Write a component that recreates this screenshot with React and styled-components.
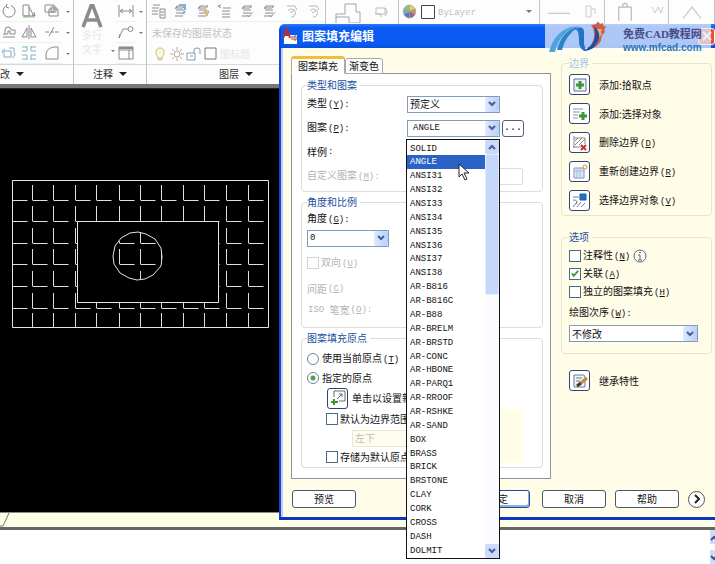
import React from "react";
import styled, { createGlobalStyle, css } from "styled-components";

const cjk = `"Noto Sans CJK SC", sans-serif`;
const mono = `"Liberation Mono", "Noto Sans CJK SC", monospace`;

const GlobalStyle = createGlobalStyle`
  *, *::before, *::after { box-sizing: border-box; }
  html, body { margin: 0; height: 100%; overflow: hidden; background: #fff; }
  #root { height: 100%; }
  body, button, select, input { font-family: ${cjk}; font-size: 10px; line-height: 14px; color: #111; }
  button, select, input, fieldset, legend, ul { margin: 0; padding: 0; }
`;

/* ---------- Main window ---------- */

const Page = styled.div`
  position: relative;
  min-height: 100vh;
  display: flex;
  flex-direction: column;
`;

const Ribbon = styled.header`
  display: flex;
  height: 84px;
  overflow: hidden;
  background: #fdfdfd;
`;

const RibbonPanel = styled.section`
  display: flex;
  flex-direction: column;
  flex: ${(p) => (p.$grow ? "1 0 auto" : "none")};
  width: ${(p) => p.$width}px;
  border-right: 1px solid #c4c4c4;
`;

const RibbonTools = styled.div`
  display: grid;
  grid-template-columns: ${(p) => p.$columns};
  grid-auto-rows: 21px;
  height: 65px;
  padding-top: 1px;
  align-items: center;
  justify-items: center;
  border-bottom: 1px solid #d9d9d9;
`;

const ToolButton = styled.button`
  display: flex;
  align-items: center;
  justify-content: center;
  width: 100%;
  height: 100%;
  overflow: hidden;
  border: 0;
  border-bottom: 1px solid #f0f0f0;
  background: none;
  color: #777;
`;

const BigTool = styled.button`
  grid-row: span 3;
  display: flex;
  flex-direction: column;
  align-items: center;
  justify-content: space-between;
  height: 100%;
  padding: 2px 0 8px;
  border: 0;
  background: none;
  color: #e6e6e6;
`;

const TallCell = styled.span`
  grid-row: span 3;
  align-self: end;
  padding-bottom: 12px;
`;

const ToolRow = styled.div`
  display: flex;
  align-items: center;
  justify-self: stretch;
  grid-column: 1 / -1;
  gap: ${(p) => p.$gap || 0}px;
  padding-left: 5px;
  color: ${(p) => p.$color || "#c2c2c2"};
`;

const LayerColor = styled.span`
  justify-self: start;
  color: #bdbdbd;
`;

const PanelTitle = styled.button`
  display: flex;
  align-items: center;
  justify-content: ${(p) => (p.$start ? "flex-start" : "center")};
  gap: 6px;
  height: 17px;
  border: 0;
  background: none;
  color: #333;
`;

const Caret = styled.span`
  display: block;
  width: 0;
  height: 0;
  border: ${(p) => p.$size || 2}px solid transparent;
  border-top-color: ${(p) => p.$color || "#777"};
  border-bottom: 0;
`;

const CanvasFrame = styled.div`
  height: 5px;
  border-bottom: 1px solid #2b2326;
  background: #777;
`;

const DrawingArea = styled.main`
  height: 423px;
  padding: 91px 12px;
  background: #000;
`;

const LayoutTabs = styled.div`
  height: 18px;
  border-top: 1px solid #888;
  border-bottom: 3px solid #666;
  background: #fcfee6;
`;

const CommandLine = styled.footer`
  display: flex;
  flex: 1;
  justify-content: flex-end;
  background: #fff;
`;

const MiniScroll = styled.div`
  display: flex;
  flex-direction: column;
  justify-content: space-between;
  width: 5px;
  overflow: hidden;
`;

const MiniArrow = styled.button`
  height: 14px;
  border: 0;
  background: #cfdcfb;
  color: #3c5488;
`;

/* ---------- Dialog ---------- */

const Dialog = styled.form`
  position: absolute;
  top: 24px;
  left: 279px;
  right: 0;
  border-left: 2px solid #1246d8;
  border-bottom: 3px solid #0b35c0;
  border-radius: 6px 0 0 0;
  background: #fffce8;
`;

const TitleBar = styled.div`
  display: flex;
  align-items: center;
  gap: 4px;
  height: 24px;
  padding: 0 0 0 2px;
  border-radius: 4px 0 0 0;
  background: linear-gradient(#2f7cf8 0, #0a5bf2 15%, #0a5bf2 80%, #0650dc);
  color: #fff;
`;

const Title = styled.h1`
  flex: 1;
  margin: 0;
  font-size: 12px;
  line-height: 16px;
  font-weight: 700;
`;

const CloseButton = styled.button`
  display: flex;
  align-items: center;
  justify-content: center;
  width: 17px;
  height: 17px;
  border: 1px solid #fff;
  border-radius: 3px;
  background: #e2502c;
`;

const Body = styled.div`
  display: grid;
  grid-template-columns: minmax(0, 260fr) minmax(0, 151fr);
  column-gap: 10px;
  padding: 8px 3px 0 8px;
  border-left: 2px solid #b5d2f2;
`;

const Tabs = styled.div`
  display: flex;
  align-items: flex-end;
  height: 18px;
  margin-bottom: -1px;
`;

const Tab = styled.button`
  position: relative;
  height: ${(p) => (p.$active ? 18 : 16)}px;
  padding: 0 ${(p) => (p.$active ? 6 : 3)}px;
  border: 1px solid #a5aab0;
  border-top: ${(p) => (p.$active ? "3px solid #f0bd3c" : "1px solid #a5aab0")};
  border-bottom-color: ${(p) => (p.$active ? "#fff" : "#a5aab0")};
  border-radius: 3px 3px 0 0;
  background: #fffefa;
  line-height: 12px;
`;

const TabPanel = styled.div`
  display: grid;
  gap: 3px;
  padding: 4px 7px 10px 9px;
  border: 1px solid #8d9499;
  background: #fff;
`;

const Group = styled.fieldset`
  min-width: 0;
  padding: 0 5px ${(p) => p.$bottom || 0}px ${(p) => p.$left || 5}px;
  border: 1px solid ${(p) => (p.$warm ? "#e6e4d2" : "#dcdcdc")};
  border-radius: 4px;
`;

const Legend = styled.legend`
  padding: 0 3px 0 0;
  color: ${(p) => (p.$faded ? "#9cc4ea" : "#1b4f9f")};
`;

const Row = styled.div`
  display: flex;
  align-items: center;
  height: ${(p) => p.$height}px;
  padding-left: ${(p) => p.$indent || 0}px;
  gap: ${(p) => p.$gap || 0}px;
  color: ${(p) => (p.$disabled ? "#b4b4b4" : "#111")};
  white-space: nowrap;
`;

const FieldLabel = styled.label`
  width: 100px;
  flex: none;
`;

const Latin = styled.span`
  margin-left: 1px;
  font-family: ${mono};
  font-size: 9px;
`;

const ComboBox = styled.div`
  position: relative;
  display: flex;
  flex: none;
  width: ${(p) => p.$width};
  height: 17px;
  border: 1px solid ${(p) => (p.$muted ? "#ebe6cf" : "#7f9db9")};
  background: ${(p) => (p.$muted ? "#fffdf0" : "#fff")};
`;

const NativeSelect = styled.select`
  flex: 1;
  min-width: 0;
  padding-left: ${(p) => p.$inset || 2}px;
  border: 0;
  outline: 0;
  appearance: none;
  background: none;
  line-height: 14px;
  ${(p) => p.$mono && css`font-family: ${mono}; font-size: 9px;`}
  &:disabled { color: #c4bfae; opacity: 1; }
`;

const DropMark = styled.span`
  display: flex;
  align-items: center;
  justify-content: center;
  flex: none;
  width: 14px;
  border-radius: 2px;
  background: linear-gradient(90deg, #dde9fe, #b9cffa);
  color: #44618f;
  pointer-events: none;
`;

const ListPopup = styled.div`
  position: absolute;
  z-index: 3;
  top: 18px;
  left: -2px;
  display: flex;
  width: 94px;
  height: 420px;
  border: 1px solid #111;
  background: #fff;
`;

const OptionList = styled.ul`
  display: grid;
  grid-auto-rows: 1fr;
  flex: 1;
  ul& { padding-top: 2px; }
  list-style: none;
  font-family: ${mono};
  font-size: 9px;
  line-height: 14px;
`;

const OptionItem = styled.li`
  min-height: 0;
  padding-left: 3px;
  overflow: hidden;
  background: ${(p) => (p.$selected ? "#2a62c6" : "none")};
  color: ${(p) => (p.$selected ? "#fff" : "#111")};
`;

const ScrollBar = styled.div`
  display: flex;
  flex-direction: column;
  justify-content: space-between;
  width: 14px;
  background: #fbfcff;
`;

const ScrollThumb = styled.div`
  height: 141px;
  margin-bottom: auto;
  border: 1px solid #e4edff;
  border-radius: 2px;
  background: #c5d7fb;
`;

const ScrollButton = styled.button`
  display: flex;
  align-items: center;
  justify-content: center;
  flex: none;
  height: 14px;
  border: 0;
  border-radius: 2px;
  background: #cbdafc;
  color: #44618f;
`;

const Pointer = styled.svg`
  position: absolute;
  z-index: 4;
  top: 42px;
  left: 50px;
`;

const BrowseButton = styled.button`
  width: 22px;
  height: 17px;
  margin-left: 2px;
  border: 1px solid #555c78;
  border-radius: 3px;
  background: #fff;
  font-family: ${mono};
`;

const TextBox = styled.input`
  width: 116px;
  height: 17px;
  border: 1px solid #dedede;
  border-radius: 2px;
  background: #fff;
`;

const Check = styled.input`
  appearance: none;
  flex: none;
  width: 12px;
  height: 12px;
  border: 1px solid #4a6a88;
  background: #fff;
  &:disabled { border-color: #d2d2d2; }
`;

const CheckHolder = styled.span`
  display: grid;
  flex: none;
  margin-right: 1px;
  & > * { grid-area: 1 / 1; }
  svg { place-self: center; pointer-events: none; }
`;

const Radio = styled.input`
  appearance: none;
  flex: none;
  width: 12px;
  height: 12px;
  border: 1px solid #6d8595;
  border-radius: 50%;
  background: #fff;
  &:checked { background: radial-gradient(circle, #49a349 0 2px, #fff 3px); }
`;

const IconButton = styled.button`
  display: flex;
  align-items: center;
  justify-content: center;
  flex: none;
  width: 21px;
  height: 21px;
  border: 1px solid #34436f;
  border-radius: 3px;
  background: #fff;
`;

const OriginPatch = styled.div`
  display: flex;
  justify-content: flex-end;
  height: 0;
`;

const PatchFill = styled.span`
  width: 50px;
  height: 54px;
  margin-right: 13px;
  background: #fffce8;
`;

const SideColumn = styled.div`
  min-width: 0;
`;

const SideGroup = styled.div`
  margin-bottom: ${(p) => p.$after}px;
`;

const Spaced = styled.div`
  padding-top: ${(p) => p.$top}px;
`;

const Actions = styled.div`
  display: flex;
  align-items: center;
  gap: 9px;
  padding: 11px 10px 9px 9px;
  border-left: 2px solid #b5d2f2;
`;

const ActionStart = styled.div`
  display: flex;
  flex: 1;
  justify-content: space-between;
  margin-right: 3px;
`;

const ActionButton = styled.button`
  width: 64px;
  height: 18px;
  border: 1px solid #49586b;
  border-radius: 3px;
  background: #fff;
  ${(p) => p.$primary && css`box-shadow: inset -1px -2px 0 #8eaee8; border-color: #28488c;`}
`;

const RoundButton = styled.button`
  display: flex;
  align-items: center;
  justify-content: center;
  width: 17px;
  height: 17px;
  border: 1px solid #555;
  border-radius: 50%;
  background: #fff;
`;

const Watermark = styled.aside`
  position: absolute;
  z-index: 5;
  top: 21px;
  right: 4px;
  display: flex;
  align-items: flex-start;
  gap: 12px;
  width: 166px;
  height: 33px;
  background: linear-gradient(transparent 0 3px, rgba(226, 235, 250, 0.75) 3px 27px, rgba(255, 255, 255, 0.5) 27px);
`;

const WatermarkText = styled.div`
  display: flex;
  flex-direction: column;
  padding-top: 5px;
`;

const SiteName = styled.strong`
  font-size: 11px;
  line-height: 16px;
  font-family: "Liberation Serif", "Noto Sans CJK SC", serif;
  color: #4a4a86;
  white-space: nowrap;
`;

const SiteLink = styled.a`
  font-family: "Liberation Sans", sans-serif;
  font-size: 10px;
  line-height: 11px;
  font-weight: 700;
  color: #2b74b4;
  text-decoration: none;
`;

/* ---------- Drawings ---------- */

const Glyph = ({ children, size = 16, color = "#8a8a8a", width = 1 }) => (
  <svg width={size} height={size} viewBox="0 0 16 16" fill="none" stroke={color} strokeWidth={width}>
    {children}
  </svg>
);

const Chevron = ({ up }) => (
  <svg width="8" height="6" viewBox="0 0 8 6" fill="none" stroke="currentColor" strokeWidth="2">
    <path d={up ? "M1 5 4 2 7 5" : "M1 1 4 4 7 1"} />
  </svg>
);

const layerSheets = "M5 3h8l-2 2H4zM4 7h8M4 10h8M3 13h8M5 3l-2 3";

const Icons = {
  rotate: <Glyph><path d="M5 3a6 6 0 1 0 5-.5M6 1 5 4l3 1" /></Glyph>,
  taper: <Glyph><path d="M2 2h6v11H2zM8 4l5 9H3M11 12l3 1-1-4" /><path d="M2 14h12" stroke="#8cc47c" /></Glyph>,
  copies: <Glyph><path d="M1 2h9v7H1zM5 6h9v7H5zM7 4h5v5H7z" /></Glyph>,
  offset: <Glyph><path d="M2 13h12M2 10h5M4 10V6a3 3 0 0 1 6 0h4v4M7 10V7h2v3h5" /></Glyph>,
  mirror: <Glyph><path d="M8 1v14M6 4v9H1zM10 4v9h5z" /></Glyph>,
  trim: <Glyph><path d="M1 8h4M7 8h3M11 8h4M5 12l5-9" /></Glyph>,
  stretch: <Glyph color="#7fb0cc"><path d="M3 6h7v6H3zM8 3h5v5M1 8a4 4 0 0 1 3-4M14 8a5 5 0 0 1-3 5" /></Glyph>,
  array: <Glyph color="#7fb4c8"><path d="M6 1v5H1M10 1v5h5M6 15v-5H1M10 15v-5h5M1 2h5M10 2h5M1 14h5M10 14h5" /></Glyph>,
  fillet: <Glyph><path d="M2 14V9q1-6 8-7h4v12z" /></Glyph>,
  dimension: <Glyph><path d="M1 2v12M15 2v12M2 8h12M5 6 2 8l3 2M11 6l3 2-3 2" /></Glyph>,
  leader: <Glyph><path d="M1 14 5 5h5M1 14l1-4" /><circle cx="12.5" cy="5" r="2.5" /></Glyph>,
  table: <Glyph><path d="M1 2h14v12H1zM1 5h14M11 5v9" /><path d="M1 3h14" strokeWidth="2" /></Glyph>,
  layerProps: <Glyph><path d="M3 2h7M2 5h7M2 8h6M2 11h6M10 6h5v9h-5zM11 9h3M11 12h3" /></Glyph>,
  layerBlue: <Glyph><path d={layerSheets} /><path d="M7 2h6v5M13 8l-2 3" stroke="#80acd8" strokeWidth="2" /></Glyph>,
  layerYellow: <Glyph><path d={layerSheets} /><path d="M9 8h5l-2 5z" fill="#d8c884" stroke="#c8b468" /></Glyph>,
  layerBack: <Glyph><path d="M6 5h8M5 8h8M5 11h8M5 14h8M1 3l3-1M1 3l3 2" /></Glyph>,
  layerMatch: <Glyph><path d={layerSheets} /><path d="M8 12l2 2 4-5" stroke="#80acd8" /></Glyph>,
  layerPrev: <Glyph color="#b8b8b8"><path d="M3 3h8l2 4M4 8a4 4 0 1 1 3 6M11 7l-5 3" /></Glyph>,
  bulb: <Glyph color="#c5c08b"><path d="M6 11C2 7 4 2 8 2s6 5 2 9v3H6zM6 12h4" fill="#fbf8d5" /></Glyph>,
  sun: <Glyph color="#b9a98b"><circle cx="8" cy="8" r="3" /><path d="M8 1v3M8 12v3M1 8h3M12 8h3M3 3l2 2M11 11l2 2M13 3l-2 2M3 13l2-2" /></Glyph>,
  lock: <Glyph color="#7f9fae"><path d="M1 7h8v7H1zM8 7V4q0-2 3-2t3 2v4M4 10h3" /></Glyph>,
  swatch: <Glyph color="#777"><path d="M2 2h11v11H2z" fill="#fff" /></Glyph>,
};

function Hatch() {
  const xs = [20, 41, 63, 84, 107, 128, 149, 171, 192, 214, 236];
  const ys = [20, 41, 63, 84, 106, 128];
  const verticals = xs.flatMap((x) => [...ys, 148].map((y) => `M${x + 0.5} ${y - 15}V${y}`)).join("");
  const horizontals = [0, ...xs].flatMap((x) => ys.map((y) => `M${x + 0.5} ${y + 0.5}h15`)).join("");
  const hatch = <path d={verticals + horizontals} stroke="#ddd" />;
  return (
    <svg width="257" height="148" fill="none" stroke="#e4e4e4" role="img" aria-label="填充图形">
      <defs>
        <clipPath id="disc"><circle cx="126" cy="76" r="24" /></clipPath>
      </defs>
      {hatch}
      <path d="M.5 .5h256v147H.5z" />
      <path d="M65.500 41.500h141v81h-141z" fill="#000" />
      <g clipPath="url(#disc)">{hatch}</g>
      <path d="m118 53 8-1 8 2 9 5 6 9 1 9-1 9-8 9-8 4-8 1-8-2-9-5-6-9-1-8 2-10 6-8z" />
    </svg>
  );
}

const Plus = ({ x, y }) => (
  <path d={`M${x - 4} ${y}h8M${x} ${y - 4}v8`} stroke="#3f9438" strokeWidth="3" />
);

const sideIcons = {
  pick: <Glyph color="#5a7098"><path d="M2 2h12v12H2z" fill="#eef3fb" /><Plus x={8} y={8} /></Glyph>,
  select: <Glyph color="#8997ad"><path d="M1 3h10M1 6h7M1 9h5M1 12h5" /><Plus x={11} y={10} /></Glyph>,
  remove: <Glyph color="#8c8c8c"><path d="M2 1v12M1 12h8M2 3h11v6M3 6l3-3M3 10l7-7M7 10l6-6" /><path d="m9 10 5 5M14 10l-5 5" stroke="#c03434" strokeWidth="2" /></Glyph>,
  recreate: <Glyph color="#7f98bf"><path d="M2 4h10v10H2z" fill="#dfe9f8" /><path d="M5 5v9M8 5v9M2 7h10" stroke="#a4b9dc" /><circle cx="13" cy="3" r="2" fill="#fff" stroke="#df8a42" /></Glyph>,
  view: <Glyph color="#6f7f90"><path d="M8 1h6v6H8z" fill="#1f73c6" stroke="#205ca2" /><path d="M1 4h6M1 7q6 0 3 4M1 14l4-5M5 14l4-5M9 14l4-4" /></Glyph>,
  inherit: <Glyph color="#6b7f96"><path d="M2 2h10l1 2v10H2z" fill="#eef3f8" /><path d="M4 5h6M4 8h4" /><path d="m9 10 6-5" stroke="#c98a3f" strokeWidth="3" /><path d="m5 13 4-3" stroke="#503420" strokeWidth="3" /></Glyph>,
  origin: <Glyph color="#5c6f64"><path d="M4 1h11v10H9M4 1v6M7 9l5-5M9 4h3v3" /><path d="M1 12h7M4 9v6" stroke="#3f9438" strokeWidth="2" /></Glyph>,
};

/* ---------- Data ---------- */

const patterns = [
  "SOLID", "ANGLE", "ANSI31", "ANSI32", "ANSI33", "ANSI34", "ANSI35", "ANSI36", "ANSI37", "ANSI38",
  "AR-B816", "AR-B816C", "AR-B88", "AR-BRELM", "AR-BRSTD", "AR-CONC", "AR-HBONE", "AR-PARQ1",
  "AR-RROOF", "AR-RSHKE", "AR-SAND", "BOX", "BRASS", "BRICK", "BRSTONE", "CLAY", "CORK", "CROSS",
  "DASH", "DOLMIT",
];

const boundaryActions = [
  { icon: "pick", text: "添加:拾取点" },
  { icon: "select", text: "添加:选择对象" },
  { icon: "remove", text: "删除边界", mnemonic: "D" },
  { icon: "recreate", text: "重新创建边界", mnemonic: "R" },
  { icon: "view", text: "选择边界对象", mnemonic: "V" },
];

/* ---------- Parts ---------- */

const Key = ({ k, colon }) => (
  <Latin>(<u>{k}</u>){colon && ":"}</Latin>
);

function Combo({ id, value, options, width, disabled, useMono, inset, children, plain }) {
  return (
    <ComboBox $width={width} $muted={disabled}>
      <NativeSelect id={id} aria-label={value} defaultValue={value} disabled={disabled} $mono={useMono} $inset={inset}>
        {(options || [value]).map((o) => <option key={o}>{o}</option>)}
      </NativeSelect>
      {!plain && <DropMark><Chevron /></DropMark>}
      {children}
    </ComboBox>
  );
}

function CheckRow({ id, text, mnemonic, checked, disabled, height, indent, extra }) {
  return (
    <Row $height={height} $indent={indent} $disabled={disabled} $gap={1}>
      <CheckHolder>
        <Check id={id} type="checkbox" defaultChecked={checked} disabled={disabled} />
        {checked && <Glyph size={10} color="#3d9a3d" width={3}><path d="m3 7 3 4 7-8" /></Glyph>}
      </CheckHolder>
      <label htmlFor={id}>{text}{mnemonic && <Key k={mnemonic} />}</label>
      {extra}
    </Row>
  );
}

const Tool = ({ name }) => <ToolButton type="button" aria-label={name}>{Icons[name]}</ToolButton>;

function RibbonBar() {
  return (
    <Ribbon>
      <RibbonPanel $width={74}>
        <RibbonTools $columns="18px 22px 23px 10px">
          <Tool name="rotate" /><Tool name="taper" /><Tool name="copies" /><Caret />
          <Tool name="offset" /><Tool name="mirror" /><Tool name="trim" /><Caret />
          <Tool name="stretch" /><Tool name="array" /><Tool name="fillet" /><Caret />
        </RibbonTools>
        <PanelTitle $start>改<Caret $size={4} $color="#222" /></PanelTitle>
      </RibbonPanel>
      <RibbonPanel $width={73}>
        <RibbonTools $columns="36px 6px 20px 10px">
          <BigTool type="button">
            <svg width="24" height="28" viewBox="0 0 24 28" fill="none" stroke="#8b8b8b" strokeWidth="4">
              <path d="M2 27 11 3h2l9 24M6 19h12" />
            </svg>
            <span>多行<br />文字</span>
          </BigTool>
          <TallCell><Caret /></TallCell>
          <Tool name="dimension" /><Caret />
          <Tool name="leader" /><Caret />
          <Tool name="table" /><span />
        </RibbonTools>
        <PanelTitle>注释<Caret $size={4} $color="#222" /></PanelTitle>
      </RibbonPanel>
      <RibbonPanel $width={179}>
        <RibbonTools $columns="repeat(8, 1fr)">
          <Tool name="layerProps" /><Tool name="layerBlue" /><Tool name="layerYellow" /><Tool name="layerBack" />
          <Tool name="layerMatch" /><Tool name="layerMatch" /><Tool name="layerPrev" /><Tool name="layerPrev" />
          <ToolRow>未保存的图层状态</ToolRow>
          <ToolRow $gap={1} $color="#e6e6e6">{Icons.bulb}{Icons.sun}{Icons.lock}{Icons.swatch}图标题</ToolRow>
        </RibbonTools>
        <PanelTitle>图层<Caret $size={4} $color="#222" /></PanelTitle>
      </RibbonPanel>
      <RibbonPanel $width={73}>
        <RibbonTools $columns="43px 24px">
          <svg width="26" height="22" fill="none" stroke="#a4a4a4"><path d="M10 3h11v8h4v11H14v-6H1v6M10 3v10H1v4" /></svg>
          <Glyph color="#bbb"><path d="M3 4h9v6H3zM12 4q4 4 0 8M2 10h6v3" /></Glyph>
        </RibbonTools>
      </RibbonPanel>
      <RibbonPanel $width={141}>
        <RibbonTools $columns="20px 18px 1fr 20px">
          <svg width="15" height="15" viewBox="0 0 16 16" stroke="#999" strokeWidth=".6">
            <path d="M8 8V1a7 7 0 0 1 6 4z" fill="#e8d166" /><path d="m8 8 6-3a7 7 0 0 1 0 6z" fill="#dc8b4e" />
            <path d="m8 8 6 3a7 7 0 0 1-6 4z" fill="#a35b9c" /><path d="M8 8v7a7 7 0 0 1-6-4z" fill="#5a74ba" />
            <path d="m8 8-6 3a7 7 0 0 1 0-6z" fill="#68b6c0" /><path d="M8 8 2 5a7 7 0 0 1 6-4z" fill="#93c46b" />
          </svg>
          <svg width="14" height="14"><path d="M.5 .5h13v13H.5z" fill="#fff" stroke="#444" /></svg>
          <LayerColor><Latin>ByLayer</Latin></LayerColor>
          <Caret $size={3} />
        </RibbonTools>
      </RibbonPanel>
      <RibbonPanel $width={65}>
        <RibbonTools $columns="38px 26px">
          <Glyph size={22} color="#ccc"><path d="M0 9h16" /></Glyph>
          <Glyph color="#ccc"><path d="M3 2h5v11H3zM8 5h4v5" /></Glyph>
        </RibbonTools>
      </RibbonPanel>
      <RibbonPanel $width={64}>
        <RibbonTools $columns="40px 24px">
          <Glyph size={20} color="#bbb"><path d="M3 15V4h10v11M6 4q0-3 2-3t2 3" /></Glyph>
          <Glyph color="#ccc"><path d="M3 3 6 9l3-6 3 6 2-6" /></Glyph>
        </RibbonTools>
      </RibbonPanel>
      <RibbonPanel $width={40} $grow>
        <RibbonTools $columns="1fr">
          <Glyph size={20} color="#ccc"><path d="M1 13 8 4l7 9" /></Glyph>
        </RibbonTools>
      </RibbonPanel>
    </Ribbon>
  );
}

function PatternPanel() {
  return (
    <TabPanel role="tabpanel">
      <Group $bottom={3}>
        <Legend>类型和图案</Legend>
        <Row $height={24}>
          <FieldLabel htmlFor="type">类型<Key k="Y" colon /></FieldLabel>
          <Combo id="type" value="预定义" width="93px" />
        </Row>
        <Row $height={24}>
          <FieldLabel htmlFor="pattern">图案<Key k="P" colon /></FieldLabel>
          <Combo id="pattern" value="ANGLE" options={patterns} width="93px" useMono inset={5}>
            <ListPopup>
              <OptionList role="listbox" aria-label="图案">
                {patterns.map((p) => (
                  <OptionItem key={p} role="option" aria-selected={p === "ANGLE"} $selected={p === "ANGLE"}>{p}</OptionItem>
                ))}
              </OptionList>
              <ScrollBar>
                <ScrollButton type="button" aria-label="上移"><Chevron up /></ScrollButton>
                <ScrollThumb />
                <ScrollButton type="button" aria-label="下移"><Chevron /></ScrollButton>
              </ScrollBar>
            </ListPopup>
            <Pointer width="12" height="18" viewBox="0 0 12 18">
              <path d="M1 1v13l3-3 3 6 2-1-3-6h5z" fill="#fff" stroke="#222" />
            </Pointer>
          </Combo>
          <BrowseButton type="button">...</BrowseButton>
        </Row>
        <Row $height={24}>样例<Latin>:</Latin></Row>
        <Row $height={24} $disabled>
          <FieldLabel htmlFor="custom">自定义图案<Key k="M" colon /></FieldLabel>
          <TextBox id="custom" disabled />
        </Row>
      </Group>

      <Group $bottom={6}>
        <Legend>角度和比例</Legend>
        <Row $height={20}><label htmlFor="angle">角度<Key k="G" colon /></label></Row>
        <Row $height={18}><Combo id="angle" value="0" width="82px" useMono /></Row>
        <CheckRow id="double" text="双向" mnemonic="U" disabled height={32} />
        <Row $height={20} $disabled>间距<Key k="C" /></Row>
        <Row $height={22} $disabled><Latin>ISO&nbsp;</Latin>笔宽<Key k="O" colon /></Row>
      </Group>

      <Group>
        <Legend>图案填充原点</Legend>
        <Spaced $top={4}>
          <Row $height={19} $gap={3}>
            <Radio id="current" type="radio" name="origin" />
            <label htmlFor="current">使用当前原点<Key k="T" /></label>
          </Row>
          <Row $height={19} $gap={3}>
            <Radio id="specified" type="radio" name="origin" defaultChecked />
            <label htmlFor="specified">指定的原点</label>
          </Row>
          <Row $height={22} $indent={20} $gap={4}>
            <IconButton type="button" aria-label="设置新原点">{sideIcons.origin}</IconButton>
            单击以设置新
          </Row>
          <OriginPatch><PatchFill /></OriginPatch>
          <CheckRow id="extents" text="默认为边界范围" height={20} indent={19} />
          <Row $height={18} $indent={45}><Combo id="corner" value="左下" width="90px" disabled plain /></Row>
          <CheckRow id="store" text="存储为默认原点" height={20} indent={19} />
        </Spaced>
      </Group>
    </TabPanel>
  );
}

function SidePanel() {
  return (
    <SideColumn>
      <SideGroup $after={14}>
        <Group $warm $left={7}>
          <Legend $faded>边界</Legend>
          {boundaryActions.map((a) => (
            <Row key={a.icon} $height={29} $gap={9}>
              <IconButton type="button" aria-label={a.text}>{sideIcons[a.icon]}</IconButton>
              <span>{a.text}{a.mnemonic && <Key k={a.mnemonic} />}</span>
            </Row>
          ))}
        </Group>
      </SideGroup>
      <SideGroup $after={16}>
        <Group $warm $left={7} $bottom={11}>
          <Legend>选项</Legend>
          <Spaced $top={3}>
            <CheckRow id="annotative" text="注释性" mnemonic="N" height={18} extra={
              <Glyph size={16} color="#5e6287"><circle cx="9" cy="8" r="6" /><path d="M9 7v5M7 12h4M7 7h2" /><path d="M9 4v1" strokeWidth="2" /></Glyph>
            } />
            <CheckRow id="assoc" text="关联" mnemonic="A" checked height={18} />
            <CheckRow id="separate" text="独立的图案填充" mnemonic="H" height={18} />
            <Row $height={24}><label htmlFor="order">绘图次序<Key k="W" colon /></label></Row>
            <Combo id="order" value="不修改" width="129px" />
          </Spaced>
        </Group>
      </SideGroup>
      <Row $height={21} $indent={8} $gap={9}>
        <IconButton type="button" aria-label="继承特性">{sideIcons.inherit}</IconButton>
        <span>继承特性</span>
      </Row>
    </SideColumn>
  );
}

export default function App() {
  return (
    <>
      <GlobalStyle />
      <Page>
        <RibbonBar />
        <CanvasFrame />
        <DrawingArea><Hatch /></DrawingArea>
        <LayoutTabs>
          <svg width="10" height="14" fill="none" stroke="#777"><path d="M9 0 3 13H0" /></svg>
        </LayoutTabs>
        <CommandLine>
          <MiniScroll>
            <MiniArrow type="button" aria-label="上"><Chevron up /></MiniArrow>
            <MiniArrow type="button" aria-label="下"><Chevron /></MiniArrow>
          </MiniScroll>
        </CommandLine>

        <Dialog>
          <TitleBar>
            <svg width="15" height="18" viewBox="0 0 15 18">
              <path d="M1 8h13v9H1z" fill="#fff" />
              <path d="m0 11 4-9 3 9M2 8h4" fill="none" stroke="#c62a28" strokeWidth="2" />
              <path d="M9 9v4M11 9h2v4h-2z" fill="none" stroke="#a9433c" />
            </svg>
            <Title>图案填充编辑</Title>
            <CloseButton type="button" aria-label="关闭">
              <svg width="10" height="10" stroke="#fff" strokeWidth="2"><path d="m1 1 8 8M9 1 1 9" /></svg>
            </CloseButton>
          </TitleBar>
          <Body>
            <div>
              <Tabs role="tablist">
                <Tab type="button" role="tab" $active>图案填充</Tab>
                <Tab type="button" role="tab">渐变色</Tab>
              </Tabs>
              <PatternPanel />
            </div>
            <SidePanel />
          </Body>
          <Actions>
            <ActionStart>
              <ActionButton type="button">预览</ActionButton>
              <ActionButton type="button" $primary>确定</ActionButton>
            </ActionStart>
            <ActionButton type="button">取消</ActionButton>
            <ActionButton type="button">帮助</ActionButton>
            <RoundButton type="button" aria-label="更多选项">
              <svg width="8" height="10" fill="none" stroke="#222" strokeWidth="2"><path d="m2 1 4 4-4 4" /></svg>
            </RoundButton>
          </Actions>
        </Dialog>

        <Watermark>
          <svg width="66" height="33" viewBox="0 0 66 33" fill="none">
            <path d="M46 4q6 0 7-4 1 4 5 2-1 3 4 4-4 1-2 5-4 3-4 9-4 7-12 8 9-14 2-24z" fill="#cf5d4c" />
            <path d="M57 8q-2 3 0 5-4 4-5 9-3 5-8 6 9-10 7-20z" fill="#e8b06a" />
            <path d="M4 31Q10 8 31 5 14 13 10 31z" fill="#4fa4dc" />
            <path d="M12 29Q17 9 34 5 20 15 17 29z" fill="#2b83cc" />
            <path d="M29 9q8-6 10 1 0 9 0 13l2 7q-6-1-7-8 0-8-1-11-1-3-4-2z" fill="#2372c4" />
            <path d="M38 30Q54 22 49 5q11 10-1 22-4 3-10 3z" fill="#1b4ea0" />
          </svg>
          <WatermarkText>
            <SiteName>免费CAD教程网</SiteName>
            <SiteLink href="#site">www.mfcad.com</SiteLink>
          </WatermarkText>
        </Watermark>
      </Page>
    </>
  );
}
